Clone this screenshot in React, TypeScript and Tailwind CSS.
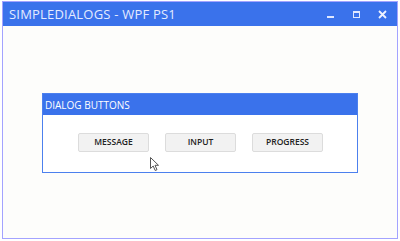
import React from "react";

export default function App() {
  return (
    <div className="w-[400px] h-[241px] bg-white relative" style={{ fontFamily: '"Open Sans", "Noto Sans", sans-serif' }}>
      <div className="absolute left-[2px] top-[1px] w-[396px] h-[238px] border border-[#a3a3ff] flex flex-col bg-[#fdfdfb]">
        <div className="h-[24px] bg-[#3a72eb] flex items-center pl-[6px] shrink-0">
          <span className="text-[13px] text-[#e4ebff] tracking-[0.2px] leading-none">SIMPLEDIALOGS - WPF PS1</span>
          <div className="ml-auto flex items-center h-full">
            <div className="w-[26px] h-full flex items-center justify-center">
              <div className="w-[7px] h-[2px] bg-[#dfe7ff] mt-[6px]"></div>
            </div>
            <div className="w-[26px] h-full flex items-center justify-center">
              <div className="w-[7px] h-[7px] border border-[#dfe7ff] border-t-2"></div>
            </div>
            <div className="w-[26px] h-full flex items-center justify-center mr-[2px]">
              <svg width="9" height="9" viewBox="0 0 9 9">
                <path d="M1 1 L8 8 M8 1 L1 8" stroke="#eef2ff" strokeWidth="1.8" />
              </svg>
            </div>
          </div>
        </div>
        <div className="flex-1 pt-[67px] pl-[39px]">
          <div className="w-[316px] h-[80px] border border-[#4c80ee] flex flex-col bg-white">
            <div className="h-[21px] bg-[#3a72eb] flex items-center pl-[2px]">
              <span className="text-[10px] text-white leading-none">DIALOG BUTTONS</span>
            </div>
            <div className="flex gap-[16px] pl-[35px] pt-[18px]">
              {["MESSAGE", "INPUT", "PROGRESS"].map((t) => (
                <div key={t} className="w-[71px] h-[19px] bg-[#f2f2f2] border border-[#dcdcdc] rounded-[2px] flex items-center justify-center">
                  <span className="text-[8.5px] font-semibold text-[#222] leading-none">{t}</span>
                </div>
              ))}
            </div>
          </div>
        </div>
      </div>
      <svg className="absolute left-[150px] top-[157px]" width="10" height="15" viewBox="0 0 10 15">
        <path d="M0.5 0.5 L0.5 11.5 L3.2 9 L5.2 13.5 L7 12.7 L5 8.3 L8.5 8.3 Z" fill="#fff" stroke="#555" strokeWidth="1" />
      </svg>
    </div>
  );
}
